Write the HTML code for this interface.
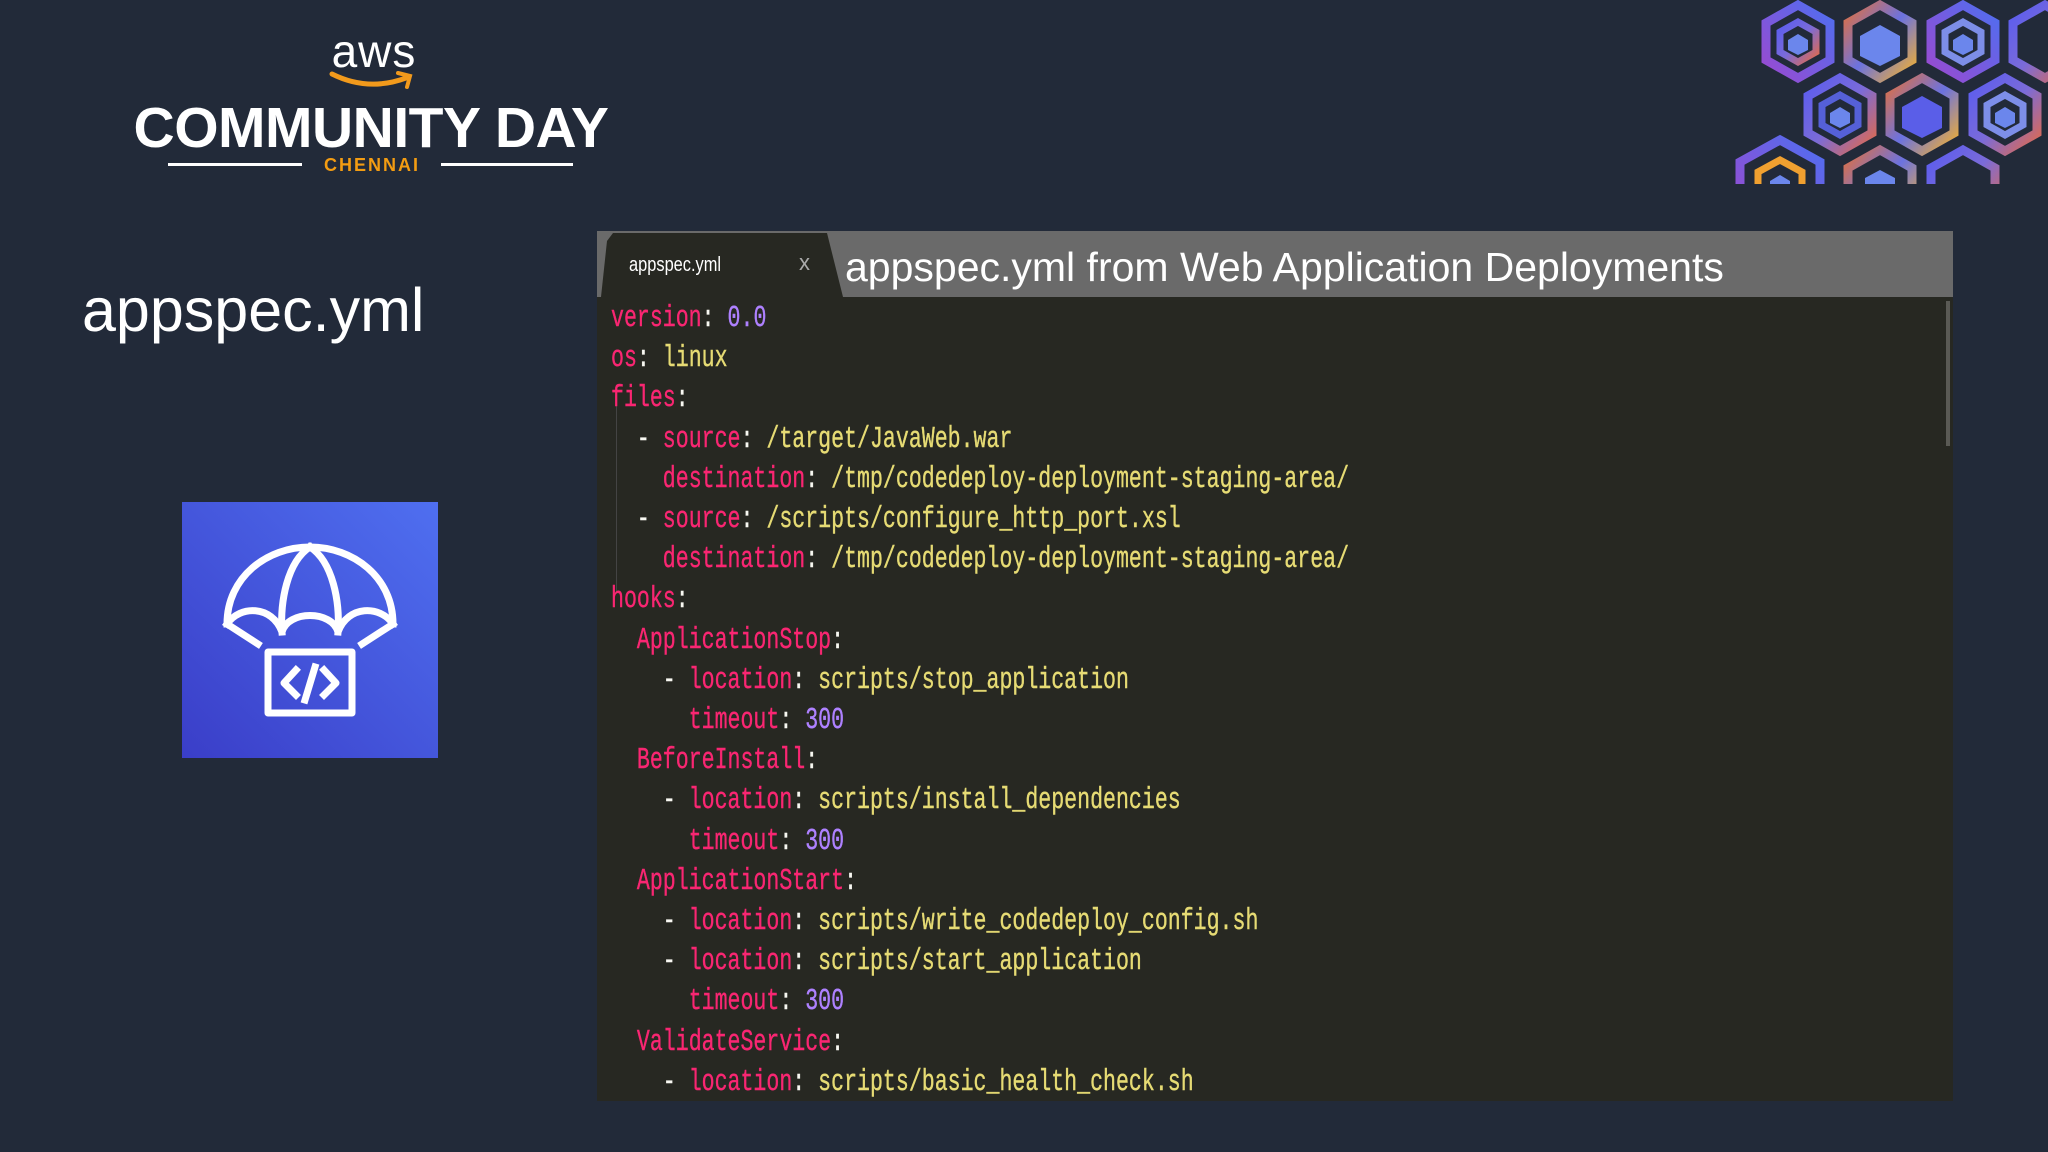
<!DOCTYPE html>
<html><head><meta charset="utf-8"><style>
html,body{margin:0;padding:0}
body{width:2048px;height:1152px;background:#222a39;position:relative;overflow:hidden;font-family:"Liberation Sans",sans-serif}
.abs{position:absolute}
#code{position:absolute;left:597px;top:231px;width:1356px;height:870px;background:#272822;overflow:hidden}
#bar{position:absolute;left:0;top:0;width:1356px;height:66px;background:#6a6a6a}
#lines{position:absolute;left:14px;top:68px;transform:scaleX(0.696);transform-origin:0 0;font-family:"Liberation Mono",monospace;font-size:31px;line-height:40.2px;white-space:pre;color:#f8f8f2;-webkit-text-stroke:0.4px currentColor}
.k{color:#f92672}.v{color:#e6db74}.n{color:#ae81ff}
</style></head><body>
<div class="abs" style="left:0;width:748px;top:24px;text-align:center;color:#fff;font-size:46px;letter-spacing:1px">aws</div>
<svg class="abs" style="left:328px;top:70px" width="90" height="22" viewBox="0 0 90 22"><path d="M4 4 Q40 22 78 8" stroke="#f29a1c" stroke-width="5" fill="none" stroke-linecap="round"/><path d="M70 3 L82 6 L79 17" stroke="#f29a1c" stroke-width="4" fill="none" stroke-linecap="round"/></svg>
<div class="abs" style="left:0;width:742px;top:95px;text-align:center;color:#fff;font-size:57px;font-weight:bold;letter-spacing:-0.5px">COMMUNITY DAY</div>
<div class="abs" style="left:168px;top:163px;width:134px;height:3px;background:#fff"></div>
<div class="abs" style="left:441px;top:163px;width:132px;height:3px;background:#fff"></div>
<div class="abs" style="left:0;width:744px;top:155px;text-align:center;color:#f39c12;font-size:18px;font-weight:bold;letter-spacing:2px">CHENNAI</div>
<svg class="abs" style="left:1720px;top:0" width="328" height="187" viewBox="0 0 328 187">
<defs>
<linearGradient id="g1" x1="0" y1="0" x2="1" y2="1"><stop offset="0" stop-color="#5a5cf0"/><stop offset=".5" stop-color="#7b6bd8"/><stop offset="1" stop-color="#e26a4a"/></linearGradient>
<linearGradient id="g2" x1="0" y1="0" x2="1" y2="1"><stop offset="0" stop-color="#e07040"/><stop offset=".5" stop-color="#6b72e0"/><stop offset="1" stop-color="#f2b030"/></linearGradient>
<linearGradient id="g3" x1="1" y1="0" x2="0" y2="1"><stop offset="0" stop-color="#4f6ef0"/><stop offset="1" stop-color="#9a4ad0"/></linearGradient>
</defs>
<g fill="none" stroke-width="9">
<polygon points="78,5 110,23 110,60 78,78 46,60 46,23" stroke="url(#g3)"/>
<polygon points="78,22 96,32 96,52 78,62 60,52 60,32" stroke="url(#g1)" stroke-width="7"/>
<polygon points="160,5 192,23 192,60 160,78 128,60 128,23" stroke="url(#g2)"/>
<polygon points="243,5 275,23 275,60 243,78 211,60 211,23" stroke="url(#g3)"/>
<polygon points="243,22 261,32 261,52 243,62 225,52 225,32" stroke="#7d8ee8" stroke-width="7"/>
<polygon points="325,5 357,23 357,60 325,78 293,60 293,23" stroke="url(#g1)"/>
<polygon points="120,78 152,96 152,133 120,151 88,133 88,96" stroke="url(#g1)"/>
<polygon points="120,95 138,105 138,125 120,135 102,125 102,105" stroke="#5560d8" stroke-width="7"/>
<polygon points="202,78 234,96 234,133 202,151 170,133 170,96" stroke="url(#g2)"/>
<polygon points="285,78 317,96 317,133 285,151 253,133 253,96" stroke="url(#g1)"/>
<polygon points="285,95 303,105 303,125 285,135 267,125 267,105" stroke="#7d8ee8" stroke-width="7"/>
<polygon points="60,140 100,162 100,200 60,222 20,200 20,162" stroke="url(#g3)"/>
<polygon points="60,160 82,172 82,200 60,212 38,200 38,172" stroke="#f0a030" stroke-width="7"/>
<polygon points="160,150 192,168 192,205 160,223 128,205 128,168" stroke="url(#g2)"/>
<polygon points="243,150 275,168 275,205 243,223 211,205 211,168" stroke="url(#g1)"/>
</g>
<g fill="#6b86ec">
<polygon points="78,34 88,40 88,50 78,55 68,50 68,40"/>
<polygon points="160,25 180,36 180,56 160,66 140,56 140,36"/>
<polygon points="243,34 253,40 253,50 243,55 233,50 233,40"/>
<polygon points="202,96 222,107 222,128 202,138 182,128 182,107" fill="#5a5ee8"/>
<polygon points="120,107 130,113 130,123 120,128 110,123 110,113"/>
<polygon points="285,107 295,113 295,123 285,128 275,123 275,113"/>
<polygon points="160,170 175,178 175,187 145,187 145,178"/>
<polygon points="60,175 70,181 70,187 50,187 50,181"/>
</g>
<rect x="0" y="184" width="328" height="3" fill="#222a39"/>
</svg>
<div class="abs" style="left:82px;top:275px;color:#fff;font-size:61px">appspec.yml</div>
<svg class="abs" style="left:182px;top:502px" width="256" height="256" viewBox="0 0 256 256">
<defs><linearGradient id="ib" x1="0" y1="1" x2="1" y2="0"><stop offset="0" stop-color="#3a3ec8"/><stop offset="1" stop-color="#4f6ff0"/></linearGradient></defs>
<rect width="256" height="256" fill="url(#ib)"/>
<g fill="none" stroke="#fff" stroke-width="7" stroke-linejoin="round" stroke-linecap="square">
<path d="M45 122 C45 75 85 45 128 45 C171 45 211 75 211 122"/>
<path d="M45 122 C58 103 90 103 100 130 C106 108 150 108 156 130 C166 103 198 103 211 122"/>
<path d="M128 45 C105 60 98 100 100 130"/>
<path d="M128 45 C151 60 158 100 156 130"/>
<path d="M45 122 L76 142"/><path d="M211 122 L180 142"/>
<rect x="86" y="150" width="84" height="61"/>
<path d="M114 168 L102 181 L114 193"/><path d="M142 168 L154 181 L142 193"/><path d="M133 165 L123 198"/>
</g>
</svg>
<div id="code">
<div id="bar"></div>
<svg class="abs" style="left:0;top:0" width="260" height="66"><polygon points="4,66 10,10 16,2 230,2 246,66" fill="#272822"/></svg>
<div class="abs" style="left:32px;top:23px;color:#fff;font-size:20px;transform:scaleX(0.82);transform-origin:0 0">appspec.yml</div>
<div class="abs" style="left:202px;top:19px;color:#aaa;font-size:22px">x</div>
<div class="abs" style="left:248px;top:13px;color:#fff;font-size:41px;white-space:nowrap">appspec.yml from Web Application Deployments</div>
<div class="abs" style="left:1349px;top:70px;width:4px;height:145px;background:#5a5a55"></div>
<div class="abs" style="left:19px;top:160px;width:1px;height:200px;background:#444"></div>
<div id="lines"><span class="k">version</span>: <span class="n">0.0</span>
<span class="k">os</span>: <span class="v">linux</span>
<span class="k">files</span>:
  - <span class="k">source</span>: <span class="v">/target/JavaWeb.war</span>
    <span class="k">destination</span>: <span class="v">/tmp/codedeploy-deployment-staging-area/</span>
  - <span class="k">source</span>: <span class="v">/scripts/configure_http_port.xsl</span>
    <span class="k">destination</span>: <span class="v">/tmp/codedeploy-deployment-staging-area/</span>
<span class="k">hooks</span>:
  <span class="k">ApplicationStop</span>:
    - <span class="k">location</span>: <span class="v">scripts/stop_application</span>
      <span class="k">timeout</span>: <span class="n">300</span>
  <span class="k">BeforeInstall</span>:
    - <span class="k">location</span>: <span class="v">scripts/install_dependencies</span>
      <span class="k">timeout</span>: <span class="n">300</span>
  <span class="k">ApplicationStart</span>:
    - <span class="k">location</span>: <span class="v">scripts/write_codedeploy_config.sh</span>
    - <span class="k">location</span>: <span class="v">scripts/start_application</span>
      <span class="k">timeout</span>: <span class="n">300</span>
  <span class="k">ValidateService</span>:
    - <span class="k">location</span>: <span class="v">scripts/basic_health_check.sh</span></div>
</div>
</body></html>
